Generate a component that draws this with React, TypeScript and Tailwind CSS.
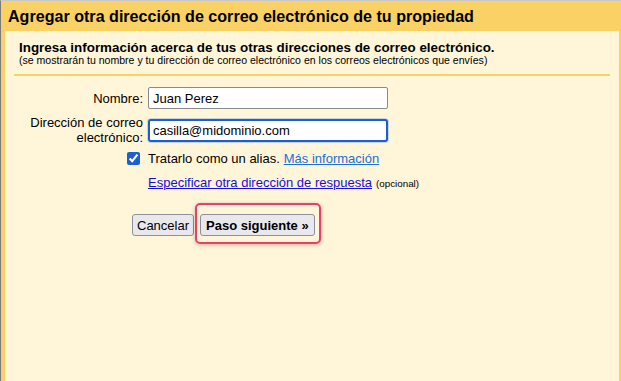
export default function App() {
  return (
    <div className="w-[621px] h-[381px] overflow-hidden bg-white font-['Liberation_Sans',Arial,sans-serif] text-black">
      <div className="flex flex-col w-full h-full border-t border-l border-t-[#c8c8c8] border-l-[#7a7a7a] bg-[#fad165]">
        {/* Header */}
        <div className="h-[30px] flex items-center pl-[7px] pt-[1px]">
          <h1 className="text-[16.1px] font-bold leading-none">
            Agregar otra dirección de correo electrónico de tu propiedad
          </h1>
        </div>

        {/* Panel */}
        <div className="flex-1 ml-[4px] mr-[2px] bg-[#fff5d9]">
          <div className="pl-[14px] pt-[9px]">
            <p className="text-[13.4px] font-bold leading-[15px]">
              Ingresa información acerca de tus otras direcciones de correo electrónico.
            </p>
            <p className="text-[10.55px] leading-[11px]">
              (se mostrarán tu nombre y tu dirección de correo electrónico en los correos electrónicos que envíes)
            </p>
          </div>
          <div className="mx-[9px] mt-[8px] h-[2px] bg-[#fad165]" />

          {/* Form */}
          <div className="mt-[11px] text-[13px] leading-[15px]">
            <div className="flex items-center">
              <label className="w-[138px] text-right">Nombre:</label>
              <input
                readOnly
                value="Juan Perez"
                className="ml-[5px] w-[240px] h-[22px] px-[4px] border border-[#8a8a8a] rounded-[2px] bg-white text-[13px] outline-none"
              />
            </div>
            <div className="flex items-center mt-[6px]">
              <label className="w-[138px] text-right">
                Dirección de correo
                <br />
                electrónico:
              </label>
              <div className="ml-[4px] p-[1px] rounded-[4px] bg-[#c9d3e3]">
                <input
                  readOnly
                  value="casilla@midominio.com"
                  className="block w-[240px] h-[23px] px-[3px] border-2 border-[#1b5fd0] rounded-[3px] bg-white text-[13px] outline-none"
                />
              </div>
            </div>
            <div className="flex items-center mt-[6px] pl-[122px]">
              <input
                type="checkbox"
                readOnly
                checked
                className="w-[13px] h-[13px] m-0 accent-[#1b5fd0]"
              />
              <span className="ml-[8px]">Tratarlo como un alias.</span>
              <a className="ml-[4px] text-[#1a6fd8] underline cursor-pointer">Más información</a>
            </div>
            <div className="flex items-baseline mt-[9px] pl-[143px]">
              <a className="text-[#1a0ddb] underline cursor-pointer">
                Especificar otra dirección de respuesta
              </a>
              <span className="ml-[4px] text-[9.8px]">(opcional)</span>
            </div>

            {/* Buttons */}
            <div className="flex items-start mt-[12px] pl-[127px]">
              <button className="mt-[11px] h-[22px] px-[4px] bg-[#e9e9ed] border border-[#8f8f9d] rounded-[3px] text-[13px]">
                Cancelar
              </button>
              <div className="ml-[1px] pt-[9px] pb-[6px] pl-[3px] pr-[4px] border-2 border-[#f03b6b] rounded-[5px] shadow-[0_1px_4px_rgba(0,0,0,0.25)]">
                <button className="block h-[22px] px-[5px] bg-[#e9e9ed] border border-[#8f8f9d] rounded-[3px] text-[13px] font-bold">
                  Paso siguiente »
                </button>
              </div>
            </div>
          </div>
        </div>
      </div>
    </div>
  );
}
